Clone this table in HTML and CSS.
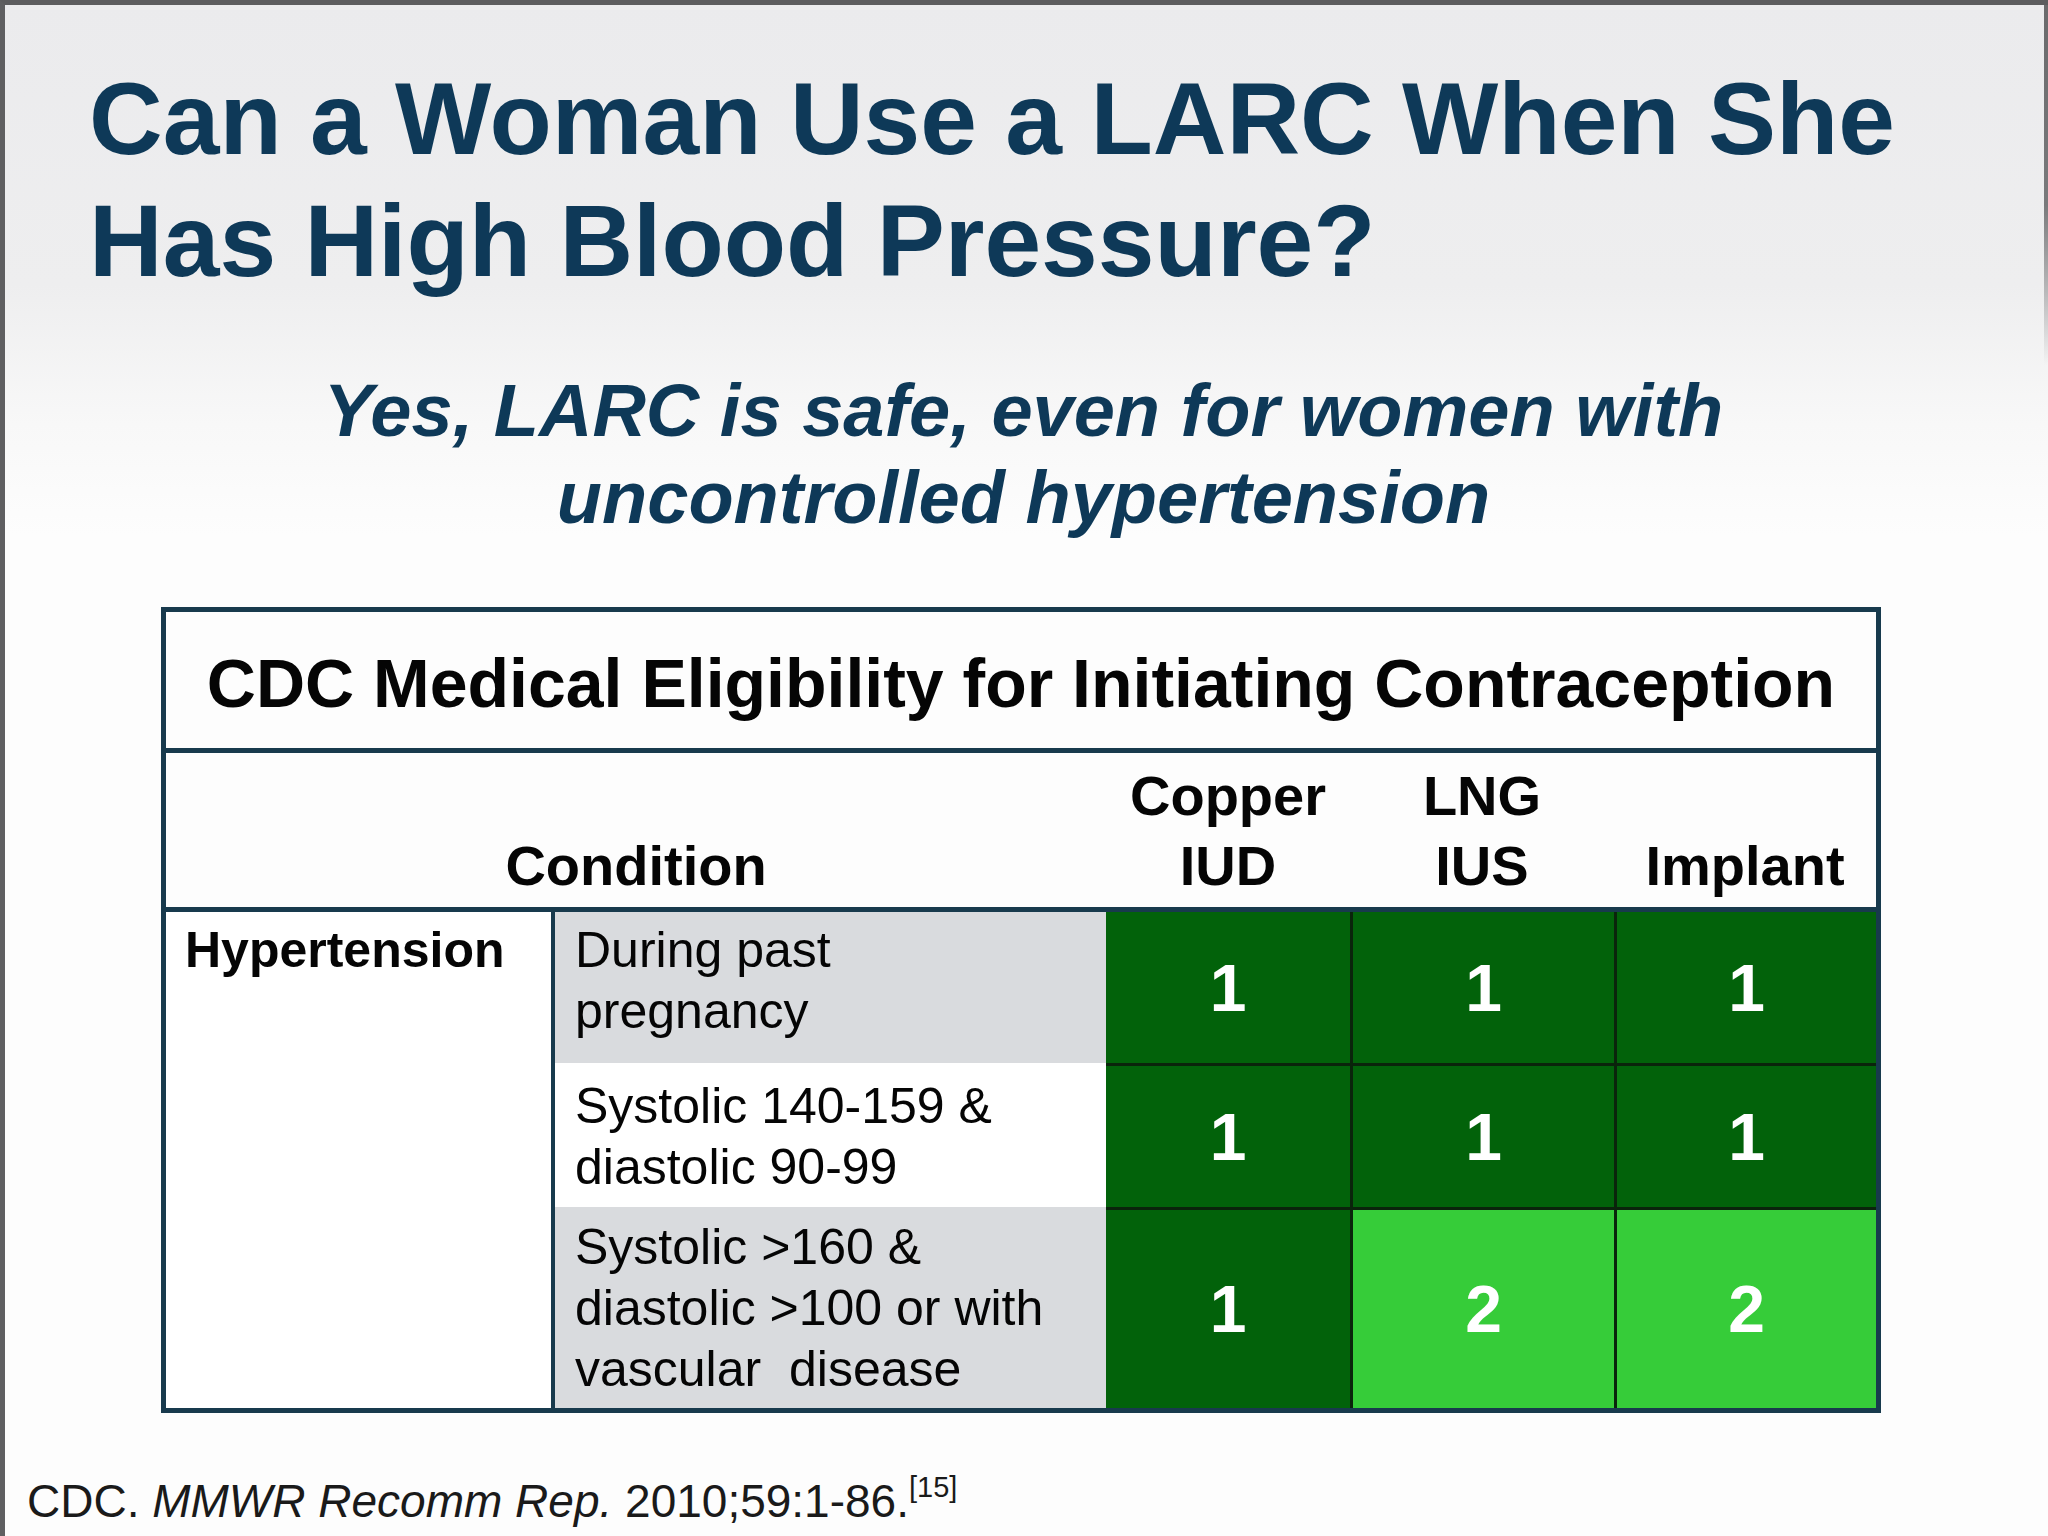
FILE: index.html
```html
<!DOCTYPE html>
<html lang="en">
<head>
<meta charset="utf-8">
<title>Can a Woman Use a LARC When She Has High Blood Pressure?</title>
<link rel="stylesheet" href="styles.css">
</head>
<body>
<div class="slide">
  <h1 class="title">Can a Woman Use a LARC When She<br>Has High Blood Pressure?</h1>
  <p class="subtitle">Yes, LARC is safe, even for women with<br>uncontrolled hypertension</p>

  <div class="tbl">
    <div class="tbl-title">CDC Medical Eligibility for Initiating Contraception</div>
    <div class="tbl-head">
      <div class="h-cell">Condition</div>
      <div class="h-cell">Copper<br>IUD</div>
      <div class="h-cell">LNG<br>IUS</div>
      <div class="h-cell">Implant</div>
    </div>
    <div class="tbl-body">
      <div class="c-cat">Hypertension</div>

      <div class="c-sub gray r1">During past<br>pregnancy</div>
      <div class="c-val dark">1</div>
      <div class="c-val dark bl">1</div>
      <div class="c-val dark bl">1</div>

      <div class="c-sub r2">Systolic 140-159 &amp;<br>diastolic 90-99</div>
      <div class="c-val dark bt">1</div>
      <div class="c-val dark bt bl">1</div>
      <div class="c-val dark bt bl">1</div>

      <div class="c-sub gray r3">Systolic &gt;160 &amp;<br>diastolic &gt;100 or with<br>vascular&nbsp; disease</div>
      <div class="c-val dark bt">1</div>
      <div class="c-val light bt bl">2</div>
      <div class="c-val light bt bl">2</div>
    </div>
  </div>

  <p class="cite">CDC. <i>MMWR Recomm Rep.</i> 2010;59:1-86.<sup>[15]</sup></p>
</div>
</body>
</html>
```

FILE: styles.css
```css
html, body {
  margin: 0;
  padding: 0;
  background: #ffffff;
}

.slide {
  box-sizing: border-box;
  width: 2048px;
  height: 1536px;
  overflow: hidden;
  padding-top: 53px;
  border-top: 5px solid #5c5c5e;
  border-left: 5px solid #5f5f61;
  font-family: "Liberation Sans", Arial, sans-serif;
  background:
    linear-gradient(to bottom, #6a6a6c 0, #7a7a7c 200px, rgba(253,253,253,0) 360px) no-repeat right top / 4px 360px,
    linear-gradient(to bottom, #ebebed 0, #eeeeef 280px, #f8f8f8 420px, #fdfdfd 530px, #fdfdfd 100%);
}

.title {
  margin: 0;
  padding-left: 84px;
  font-size: 102px;
  line-height: 122px;
  font-weight: 700;
  color: #0e3958;
  white-space: nowrap;
}

.subtitle {
  margin: 65px 0 0 0;
  padding-right: 6px;
  text-align: center;
  font-size: 74px;
  line-height: 87px;
  font-weight: 700;
  font-style: italic;
  color: #0e3958;
  white-space: nowrap;
}

.tbl {
  box-sizing: border-box;
  width: 1720px;
  margin: 66px 0 0 156px;
  border: 5px solid #183a4d;
  background: #fdfdfd;
  color: #050505;
}

.tbl-title {
  box-sizing: border-box;
  height: 141px;
  padding-top: 6px;
  border-bottom: 5px solid #183a4d;
  display: flex;
  align-items: center;
  justify-content: center;
  font-size: 68px;
  font-weight: 700;
  white-space: nowrap;
}

.tbl-head {
  box-sizing: border-box;
  height: 159px;
  padding-bottom: 6px;
  border-bottom: 5px solid #183a4d;
  display: grid;
  grid-template-columns: 940px 244px 264px 262px;
  align-items: end;
  font-size: 56px;
  line-height: 70px;
  font-weight: 700;
  text-align: center;
}

.tbl-body {
  display: grid;
  grid-template-columns: 389px 551px 244px 264px 262px;
  grid-template-rows: 151px 144px 201px;
}

.c-cat {
  box-sizing: border-box;
  grid-row: 1 / span 3;
  grid-column: 1;
  border-right: 4px solid #183a4d;
  padding: 8px 0 0 19px;
  font-size: 50px;
  line-height: 61px;
  font-weight: 700;
  background: #ffffff;
}

.c-sub {
  box-sizing: border-box;
  padding: 0 0 0 20px;
  font-size: 50px;
  line-height: 61px;
  background: #ffffff;
  white-space: nowrap;
}

.c-sub.gray {
  background: #d9dbde;
}

.c-sub.r1 { padding-top: 8px; }
.c-sub.r2 { padding-top: 13px; }
.c-sub.r3 { padding-top: 10px; }

.c-val {
  box-sizing: border-box;
  display: flex;
  align-items: center;
  justify-content: center;
  font-size: 66px;
  font-weight: 700;
  color: #ffffff;
}

.c-val.dark { background: #02620a; }
.c-val.light { background: #36cc39; }
.c-val.bl { border-left: 3px solid #0a240b; }
.c-val.bt { border-top: 3px solid #0a240b; }

.cite {
  margin: 61px 0 0 0;
  padding-left: 22px;
  font-size: 46px;
  line-height: 54px;
  color: #1a1a1a;
  white-space: nowrap;
}

.cite sup {
  font-size: 29px;
  line-height: 0;
  vertical-align: 20px;
}
```
